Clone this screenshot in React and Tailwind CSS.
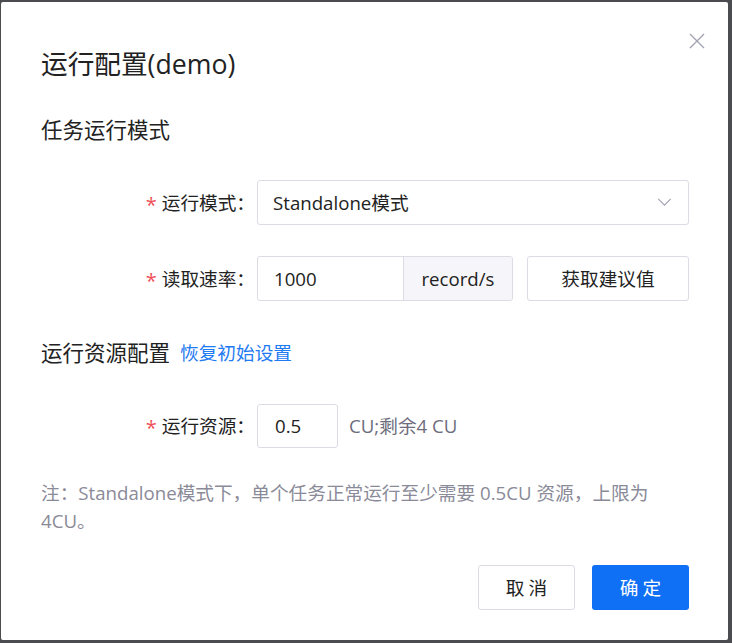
import React from "react";

const font = { fontFamily: '"Open Sans", "Noto Sans CJK SC", sans-serif' };

function Label({ children }) {
  return (
    <div className="w-[216px] shrink-0 flex items-center justify-end pr-[2px] text-[18.67px] text-[#222]">
      <span className="text-[#f0505a] text-[20px] mr-[5px] mt-[4px]">*</span>
      <span>{children}：</span>
    </div>
  );
}

export default function App() {
  return (
    <div className="w-[732px] h-[643px] bg-[#4b4c4f] pt-[2px] pl-[1px]" style={font}>
      <div className="relative w-[727px] h-[638px] bg-white rounded-[2px] flex flex-col pl-[40px] pr-[39px]">
        <button className="absolute right-[22px] top-[30px] w-[18px] h-[18px] text-[#a3a3b3]">
          <svg viewBox="0 0 18 18" width="18" height="18" fill="none" stroke="currentColor" strokeWidth="1.4">
            <path d="M2 2 L16 16 M16 2 L2 16" />
          </svg>
        </button>
        <div className="mt-[44px] h-[36px] leading-[36px] text-[26.67px] text-[#222]">运行配置(demo)</div>
        <div className="mt-[33px] h-[30px] leading-[30px] text-[21.5px] text-[#222]">任务运行模式</div>

        <div className="mt-[35px] flex h-[45px]">
          <Label>运行模式</Label>
          <div className="flex-1 flex items-center justify-between border border-[#dcdce4] rounded-[3px] pl-[15px] pr-[16px] text-[18.67px] text-[#222]">
            <span>Standalone模式</span>
            <svg viewBox="0 0 16 10" width="15" height="9" fill="none" stroke="#a3a3b3" strokeWidth="1.3">
              <path d="M1 1 L8 8 L15 1" />
            </svg>
          </div>
        </div>

        <div className="mt-[31px] flex h-[45px]">
          <Label>读取速率</Label>
          <div className="flex border border-[#dcdce4] rounded-[3px] w-[256px]">
            <div className="w-[145px] flex items-center pl-[16px] text-[18.67px] text-[#222]">1000</div>
            <div className="flex-1 flex items-center justify-center bg-[#f6f6fa] border-l border-[#dcdce4] text-[18.67px] text-[#222] rounded-r-[3px]">record/s</div>
          </div>
          <button className="ml-[14px] flex-1 border border-[#dcdce4] rounded-[3px] text-[18.67px] text-[#222]">获取建议值</button>
        </div>

        <div className="mt-[37px] h-[30px] leading-[30px] flex items-center">
          <span className="text-[21.5px] text-[#222]">运行资源配置</span>
          <span className="ml-[10px] text-[18.67px] text-[#1f7bf2]">恢复初始设置</span>
        </div>

        <div className="mt-[36px] flex h-[44px]">
          <Label>运行资源</Label>
          <div className="w-[81px] flex items-center pl-[17px] border border-[#dcdce4] rounded-[3px] text-[18.67px] text-[#222]">0.5</div>
          <div className="ml-[11px] flex items-center text-[18.67px] text-[#6d6d7d]">CU;剩余4 CU</div>
        </div>

        <div className="mt-[31px] w-[640px] text-[18.67px] leading-[28px] text-[#8a8a98]">
          注：Standalone模式下，单个任务正常运行至少需要 0.5CU 资源，上限为4CU。
        </div>

        <div className="mt-[30px] flex justify-end gap-[17px]">
          <button className="w-[97px] h-[45px] border border-[#dcdce4] rounded-[3px] text-[18.67px] text-[#222] tracking-[4px] pl-[4px]">取消</button>
          <button className="w-[97px] h-[45px] bg-[#0f6ff5] rounded-[3px] text-[18.67px] text-white tracking-[4px] pl-[4px]">确定</button>
        </div>
      </div>
    </div>
  );
}
